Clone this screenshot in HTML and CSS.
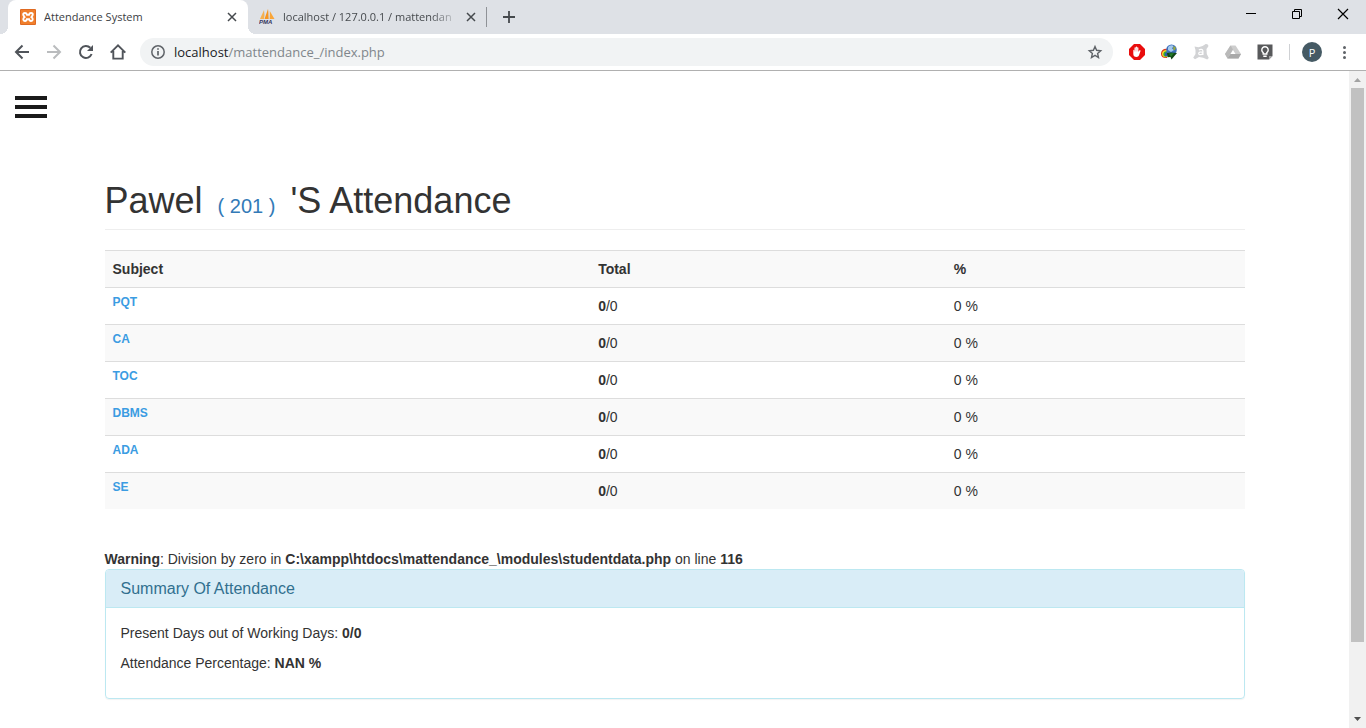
FILE: index.html
```html
<!DOCTYPE html>
<html lang="en">
<head>
<meta charset="utf-8">
<meta name="viewport" content="width=device-width, initial-scale=1">
<title>Attendance System</title>
<link rel="stylesheet" href="styles.css">
</head>
<body>
<div class="browser">
  <header class="tabstrip">
    <div class="tab tab-active">
      <svg class="favicon" viewBox="0 0 16 16"><rect width="16" height="16" rx="1" fill="#df6a22"/><rect x="1" y="1" width="14" height="14" fill="#f07f2c"/><path d="M5 4C3.400 4 3 5 3.300 6c.2.800.7 1.300 1.300 2-.8.600-1.400 1.400-1.300 2.500.1 1.100 1 1.600 1.900 1.500 1-.2 1.500-.9 1.700-1.800h2.200c.2.900.7 1.600 1.700 1.800.9.100 1.800-.4 1.900-1.500.1-1.100-.5-1.900-1.300-2.500.6-.7 1.100-1.200 1.300-2 .3-1-.1-2-1.700-2-1.200 0-1.700.800-2 1.800H7C6.700 4.800 6.200 4 5 4z" fill="none" stroke="#fff" stroke-width="1.900"/></svg>
      <span class="tab-title">Attendance System</span>
      <button class="tab-close" aria-label="Close tab"><svg viewBox="0 0 10 10" width="10" height="10"><path d="M1 1l8 8M9 1L1 9" stroke="#45494d" stroke-width="1.500"/></svg></button>
    </div>
    <div class="tab tab-idle">
      <svg class="favicon" viewBox="0 0 16 16"><path d="M5 1L1 10h4z" fill="#f5b04f"/><path d="M9 0L5.500 10H10z" fill="#f8941d"/><path d="M10.800 2v8h4.700z" fill="#f9a63a"/><path d="M5 1l1 5-1 4zM9 0l1.800 10H9.500z" fill="#d8c6ae"/><text x="0" y="15" class="pma">PMA</text></svg>
      <span class="tab-title tab-fade">localhost / 127.0.0.1 / mattendan</span>
      <button class="tab-close" aria-label="Close tab"><svg viewBox="0 0 10 10" width="10" height="10"><path d="M1 1l8 8M9 1L1 9" stroke="#45494d" stroke-width="1.500"/></svg></button>
    </div>
    <span class="tab-divider"></span>
    <button class="new-tab" aria-label="New tab"><svg viewBox="0 0 12 12" width="12" height="12"><path d="M6 0v12M0 6h12" stroke="#45494d" stroke-width="1.800"/></svg></button>
    <div class="window-controls">
      <button aria-label="Minimize"><svg viewBox="0 0 12 12" width="12" height="12"><path d="M1 5.500h10" stroke="#000"/></svg></button>
      <button aria-label="Restore"><svg viewBox="0 0 12 12" width="12" height="12"><path d="M1.500 3.500h7v7h-7zM3.500 3.500v-2h7v7h-2" fill="none" stroke="#000"/></svg></button>
      <button aria-label="Close"><svg viewBox="0 0 12 12" width="12" height="12"><path d="M1 1l10 10M11 1L1 11" stroke="#000" stroke-width="1.200"/></svg></button>
    </div>
  </header>

  <nav class="toolbar" aria-label="Browser">
    <div class="nav-buttons">
      <button aria-label="Back"><svg viewBox="0 0 16 16"><path d="M15 8H2M8.500 1.500L2 8l6.500 6.500" fill="none" stroke="#50545a" stroke-width="2"/></svg></button>
      <button aria-label="Forward"><svg viewBox="0 0 16 16"><path d="M1 8h13M7.500 1.500L14 8l-6.500 6.500" fill="none" stroke="#babcbe" stroke-width="2"/></svg></button>
      <button aria-label="Reload"><svg viewBox="0 0 16 16"><path d="M13.600 10A6 6 0 1 1 12.300 3.800" fill="none" stroke="#50545a" stroke-width="2"/><path d="M15 1v6H9z" fill="#50545a"/></svg></button>
      <button aria-label="Home"><svg viewBox="0 0 16 16"><path d="M.7 8.700L8 1.400l7.300 7.300M3.300 7v7.600h9.400V7" fill="none" stroke="#50545a" stroke-width="1.900"/></svg></button>
    </div>
    <div class="omnibox">
      <svg class="info" viewBox="0 0 14 14"><circle cx="7" cy="7" r="6.200" fill="none" stroke="#5f6368" stroke-width="1.500"/><path d="M7 6v4.500M7 3.300v1.500" stroke="#5f6368" stroke-width="1.700"/></svg>
      <div class="url" role="textbox" aria-label="Address"><span class="host">localhost</span>/mattendance_/index.php</div>
      <button class="star" aria-label="Bookmark"><svg viewBox="0 0 16 16"><path d="M8 2.500l1.600 3.800 4.100.4-3.100 2.700.9 4.100L8 11.300l-3.500 2.200.9-4.100-3.100-2.700 4.100-.4z" fill="none" stroke="#5f6368" stroke-width="1.400"/></svg></button>
    </div>
    <div class="extensions">
      <button aria-label="Ad blocker"><svg viewBox="0 0 16 16"><path d="M5 0h6l5 5v6l-5 5H5l-5-5V5z" fill="#e90d0d"/><path d="M4.300 6.500c0-.9 1.200-.9 1.200 0V4c0-1 1.300-1 1.300 0v-.8c0-1 1.300-1 1.300 0V4c0-1 1.300-1 1.300 0v4l.8-1.400c.6-.9 1.600-.4 1.300.5l-1.500 4.200c-.5 1.300-1.200 1.700-2.500 1.700-2.100 0-3.200-1-3.200-3z" fill="#fff"/><path d="M5.500 4v3.500M6.800 3.500v4M8.100 4v3.500" stroke="#f28080" stroke-width=".4"/></svg></button>
      <button aria-label="Download manager"><svg viewBox="0 0 16 16"><path d="M0 10C-.2 6 3 4 7 5l-1 9C2.500 14.500 0 13 0 10z" fill="#d93b22"/><path d="M1 10c0-3 2.500-4.500 6-4l-1 7C3 13.500 1 12.500 1 10z" fill="#f5dc26"/><path d="M2.300 10c.2-2 2-3.300 5-2.500L6 12.500c-2.500.5-3.700-.5-3.700-2.500z" fill="#34a342"/><path d="M4 10.500C4 8.500 6 8 8 9l-2 3c-1.500 0-2-.5-2-1.500z" fill="#2c55b5"/><circle cx="10.500" cy="5.700" r="5.300" fill="#3d70bd"/><path d="M7 3.500c1-2 4-3 5.500-1.500L11 4.500l2 1.500-3 2-3-2z" fill="#a3c8ec"/><path d="M12.500 2l2.300 1.500-.8 3-1.800-1.200z" fill="#9aab3a"/><path d="M6 9l4-.5 6 .5-5.500 6.500-1-2.500-3 .3z" fill="#124716"/><path d="M8 9.500l5-.5-3 4z" fill="#257c28"/></svg></button>
      <button aria-label="Security"><svg viewBox="0 0 16 16"><path d="M1.500 2.500l4 .8L9.500 2 12 .4c1.600-.8 3.700.2 3.300 2L13.500 5l.3 5 2 4-1.600 1.500-4-1.800L6 13l-4 2.200L.2 13.800 2.500 10V6z" fill="#d2d3d5"/><path d="M5.900 6c1.500-1.100 4-.7 4 1v4M9.900 8.300C7.500 7.700 5.700 8 5.700 9.400c0 1.800 3.300 1.600 4.200 0" fill="none" stroke="#fff" stroke-width="1.200"/></svg></button>
      <button aria-label="Drive"><svg viewBox="0 0 16 16"><path d="M5.500 1.500h5L16 10l-2.500 4.500h-11L0 10z" fill="#cdcdcd"/><path d="M5.500 1.500L0 10l2.500 4.500L8 5.500z" fill="#b9b9b9"/><path d="M5.500 10h10.500l-2.500 4.500h-11z" fill="#a9a9a9"/><path d="M8 6l2.500 4h-5z" fill="#fff"/></svg></button>
      <button aria-label="Keep"><svg viewBox="0 0 16 16"><path d="M.5.500h15V12L12 15.500H.5z" fill="#58595b"/><path d="M15.500 12H12v3.500z" fill="#a5a6a8"/><path d="M6.200 10V8.600a3.200 3.200 0 1 1 3.600 0V10zM6.300 12.200h3.400" fill="none" stroke="#fff" stroke-width="1.400"/></svg></button>
      <span class="tool-divider"></span>
      <button class="avatar" aria-label="Profile">P</button>
      <button aria-label="Menu"><svg viewBox="0 0 16 16"><circle cx="8.500" cy="3.500" r="1.500" fill="#5f6368"/><circle cx="8.500" cy="8.500" r="1.500" fill="#5f6368"/><circle cx="8.500" cy="13.500" r="1.500" fill="#5f6368"/></svg></button>
    </div>
  </nav>

  <div class="viewport">
    <main class="page">
      <button class="menu-toggle" aria-label="Open menu"><span></span><span></span><span></span></button>
      <div class="container">
        <h1 class="page-header">Pawel <a class="roll" href="#">( 201 )</a> 'S Attendance</h1>
        <table class="subjects">
          <thead>
            <tr><th class="col-subject">Subject</th><th class="col-total">Total</th><th>%</th></tr>
          </thead>
          <tbody>
            <tr><td><a class="subject" href="#">PQT</a></td><td><b>0</b>/0</td><td>0 %</td></tr>
            <tr><td><a class="subject" href="#">CA</a></td><td><b>0</b>/0</td><td>0 %</td></tr>
            <tr><td><a class="subject" href="#">TOC</a></td><td><b>0</b>/0</td><td>0 %</td></tr>
            <tr><td><a class="subject" href="#">DBMS</a></td><td><b>0</b>/0</td><td>0 %</td></tr>
            <tr><td><a class="subject" href="#">ADA</a></td><td><b>0</b>/0</td><td>0 %</td></tr>
            <tr><td><a class="subject" href="#">SE</a></td><td><b>0</b>/0</td><td>0 %</td></tr>
          </tbody>
        </table>
        <div class="warning"><b>Warning</b>: Division by zero in <b>C:\xampp\htdocs\mattendance_\modules\studentdata.php</b> on line <b>116</b></div>
        <section class="panel">
          <h3 class="panel-heading">Summary Of Attendance</h3>
          <div class="panel-body">
            <p>Present Days out of Working Days: <b>0/0</b></p>
            <p>Attendance Percentage: <b>NAN %</b></p>
          </div>
        </section>
      </div>
    </main>
    <div class="scrollbar">
      <svg class="arrow" viewBox="0 0 17 17"><path d="M5 11l3.500-4 3.500 4z" fill="#a3a3a3"/></svg>
      <div class="track"><div class="thumb"></div></div>
      <svg class="arrow" viewBox="0 0 17 17"><path d="M5 6l3.500 4L12 6z" fill="#505050"/></svg>
    </div>
  </div>
</div>
</body>
</html>
```
FILE: styles.css
```css
* { box-sizing: border-box; }

body {
  margin: 0;
  background: #fff;
  color: #333;
  font: 14px/20px "Liberation Sans", Arial, sans-serif;
}

button {
  display: flex;
  align-items: center;
  justify-content: center;
  padding: 0;
  border: 0;
  background: none;
}

svg { display: block; flex: none; }
a { text-decoration: none; }

.browser {
  display: flex;
  flex-direction: column;
  min-height: 100vh;
}

/* Tab strip */
.tabstrip {
  display: flex;
  align-items: center;
  height: 34px;
  padding-left: 8px;
  background: #dee1e6;
  font-family: "Open Sans", "Noto Sans", sans-serif;
  font-size: 11px;
  color: #45494d;
}

.tab {
  display: flex;
  align-items: center;
  gap: 8px;
  width: 240px;
  height: 100%;
  padding: 0 8px 0 12px;
}

.tab-active {
  position: relative;
  border-radius: 8px 8px 0 0;
  background: #fff;
  color: #3c4043;
}

.tab-active::before,
.tab-active::after {
  content: "";
  position: absolute;
  bottom: 0;
  width: 8px;
  height: 8px;
}

.tab-active::before {
  right: 100%;
  background: radial-gradient(circle at 0 0, #dee1e6 8px, #fff 8px);
}

.tab-active::after {
  left: 100%;
  background: radial-gradient(circle at 100% 0, #dee1e6 8px, #fff 8px);
}

.tab-idle { width: 238px; padding: 0 7px 0 11px; gap: 8px; }
.tab-idle .tab-close { margin-left: -8px; }
.favicon { width: 16px; height: 16px; }
.pma { font: italic bold 6px "Liberation Sans", sans-serif; fill: #35355f; }

.tab-title {
  flex: 1;
  overflow: hidden;
  white-space: nowrap;
}

.tab-fade {
  mask-image: linear-gradient(to right, #000 82%, transparent 98%);
}

.tab-close { width: 16px; height: 16px; }
.tab-divider { width: 1px; height: 20px; background: #8f9297; }
.new-tab { width: 44px; height: 28px; }

.window-controls {
  display: flex;
  align-self: flex-start;
  margin-left: auto;
}

.window-controls button { width: 46px; height: 28px; }

/* Toolbar */
.toolbar {
  display: flex;
  align-items: center;
  height: 37px;
  padding: 0 6px;
  border-bottom: 1px solid #b0b0b0;
  background: #fff;
  font-family: "Open Sans", "Noto Sans", sans-serif;
}

.nav-buttons,
.extensions {
  display: flex;
  align-items: center;
}

.nav-buttons button,
.extensions button { width: 32px; height: 28px; }

.toolbar svg { width: 16px; height: 16px; }

.omnibox {
  display: flex;
  flex: 1;
  align-items: center;
  gap: 9px;
  height: 28px;
  margin: 0 8px 0 6px;
  padding: 0 10px;
  border-radius: 14px;
  background: #f1f3f4;
}

.toolbar .info { width: 14px; height: 14px; margin-left: 1px; }

.url {
  flex: 1;
  font-size: 13px;
  color: #80868b;
  white-space: nowrap;
}

.host { color: #202124; }

.tool-divider {
  width: 1px;
  height: 16px;
  margin: 0 4px 0 8px;
  background: #cfd1d4;
}

.extensions .avatar {
  width: 20px;
  height: 20px;
  margin: 0 6px 0 8px;
  border-radius: 50%;
  background: #455a64;
  color: #fff;
  font: 11px "Open Sans", sans-serif;
}

/* Page area */
.viewport {
  display: flex;
  flex: 1;
}

.page {
  flex: 1;
  padding: 25px 15px 29px;
}

.menu-toggle {
  flex-direction: column;
  justify-content: space-between;
  width: 32px;
  height: 22px;
}

.menu-toggle span {
  width: 100%;
  height: 4px;
  background: #1a1a1a;
}

.container {
  max-width: 1140px;
  margin: 63px auto 0;
}

.page-header {
  margin: 0 0 20px;
  padding-bottom: 8px;
  border-bottom: 1px solid #eee;
  font-size: 36px;
  font-weight: 400;
  line-height: 40px;
}

.roll {
  padding: 0 5px;
  color: #337ab7;
  font-size: 20px;
  line-height: 20px;
}

/* Subjects */
.subjects {
  width: 100%;
  margin-bottom: 40px;
  border-collapse: collapse;
  table-layout: fixed;
}

.subjects th,
.subjects td {
  padding: 8px;
  border-top: 1px solid #ddd;
  text-align: left;
  vertical-align: top;
}

.subjects tr { background: #fff; }
.subjects thead tr,
.subjects tbody tr:nth-child(even) { background: #f9f9f9; }

.col-subject { width: 42.6%; }
.col-total { width: 31.2%; }

.subject {
  display: block;
  color: #3b9ce2;
  font-size: 12px;
  font-weight: 700;
  line-height: 12px;
}

/* Summary */
.panel {
  border: 1px solid #bce8f1;
  border-radius: 4px;
  box-shadow: 0 1px 1px rgba(0, 0, 0, .05);
}

.panel-heading {
  margin: 0;
  padding: 10px 15px 9px;
  border-bottom: 1px solid #bce8f1;
  border-radius: 3px 3px 0 0;
  background: #d9edf7;
  color: #31708f;
  font-size: 16px;
  font-weight: 400;
  line-height: 18px;
}

.panel-body { padding: 15px; }
.panel-body p { margin: 0 0 10px; }

/* Scrollbar */
.scrollbar {
  display: flex;
  flex-direction: column;
  width: 17px;
  background: #f1f1f1;
}

.arrow { width: 17px; height: 17px; }
.track { flex: 1; padding: 0 2px; }
.thumb { height: 89%; background: #c1c1c1; }
```
